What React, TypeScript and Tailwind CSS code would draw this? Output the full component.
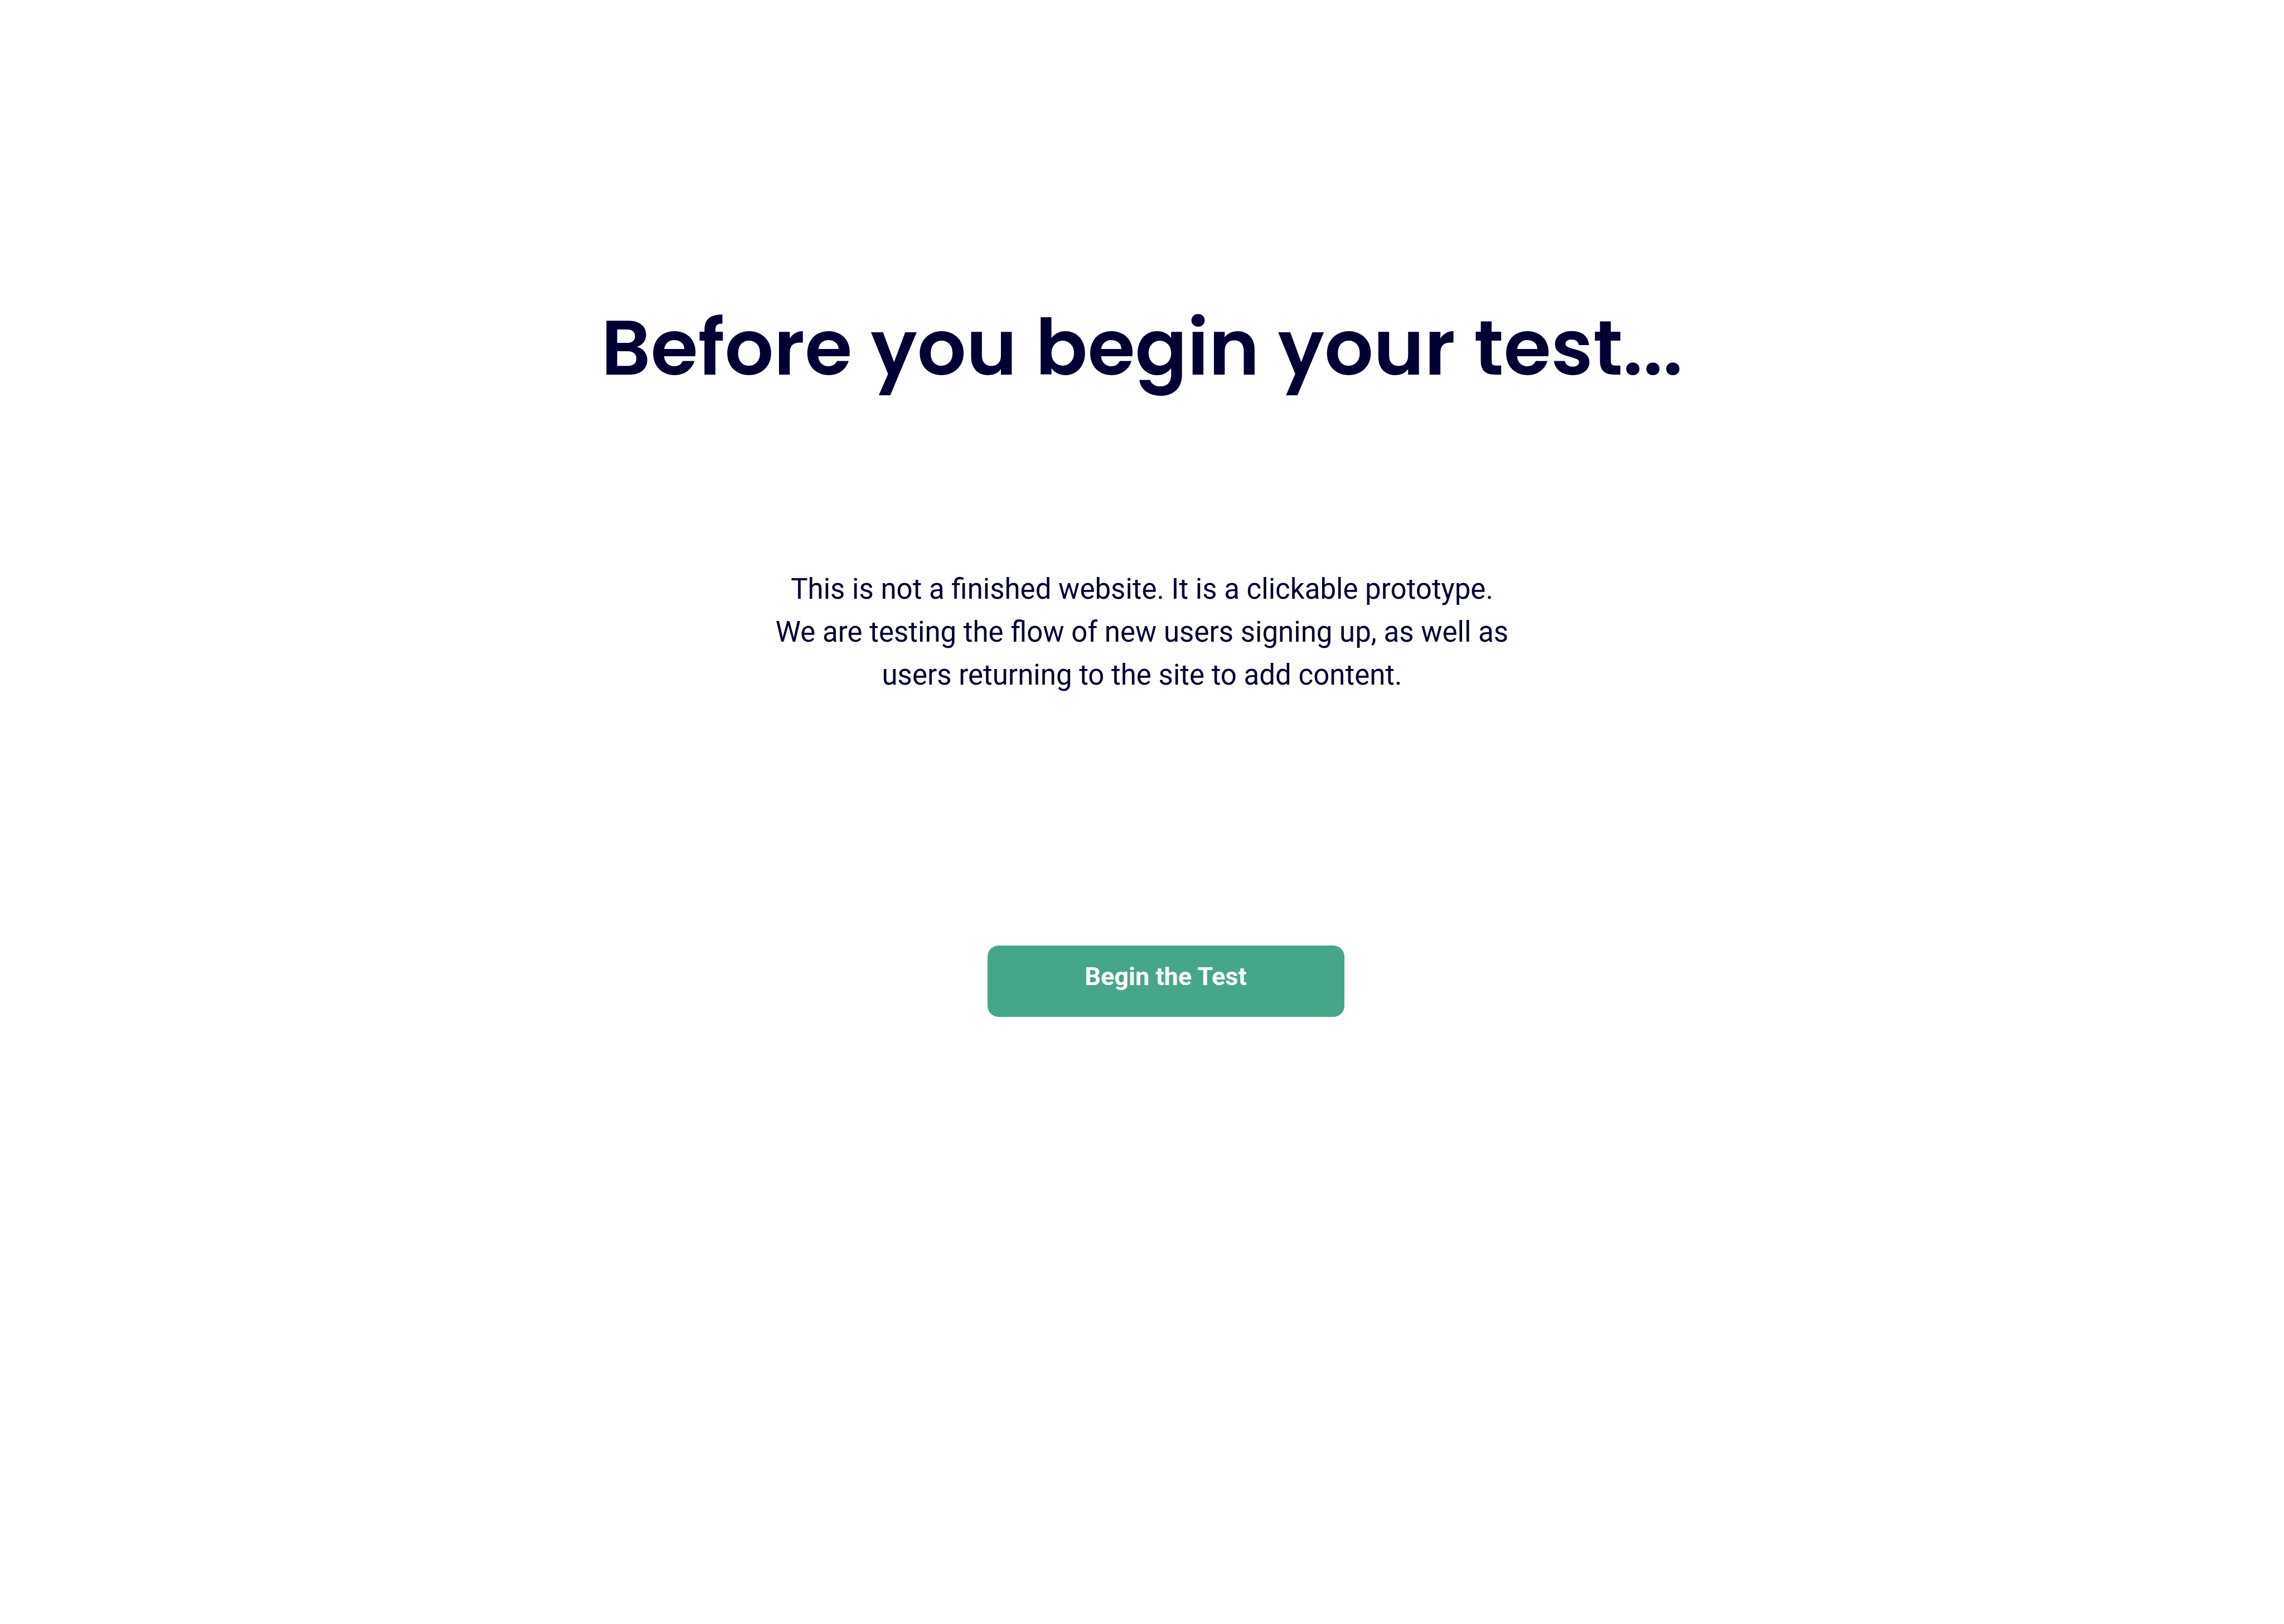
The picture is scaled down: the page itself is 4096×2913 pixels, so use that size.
export default function App() {
  return (
    <main className="flex min-h-screen flex-col items-center bg-white text-[#000033]">
      <h1 className="mt-[516px] text-center font-['Poppins','Inter',sans-serif] text-[138px] leading-[216px] font-semibold">
        Before you begin your test...
      </h1>
      <p className="mt-[286px] text-center font-['Roboto',sans-serif] text-[51px] leading-[77px]">
        This is not a finished website. It is a clickable prototype.
        <br />
        We are testing the flow of new users signing up, as well as
        <br />
        users returning to the site to add content.
      </p>
      <button
        type="button"
        className="mt-[447px] ml-[85px] h-[128px] w-[640px] rounded-[20px] bg-[#46a689] pb-4 text-center font-['Roboto',sans-serif] text-[45px] leading-[68px] font-bold text-white"
      >
        Begin the Test
      </button>
    </main>
  );
}
